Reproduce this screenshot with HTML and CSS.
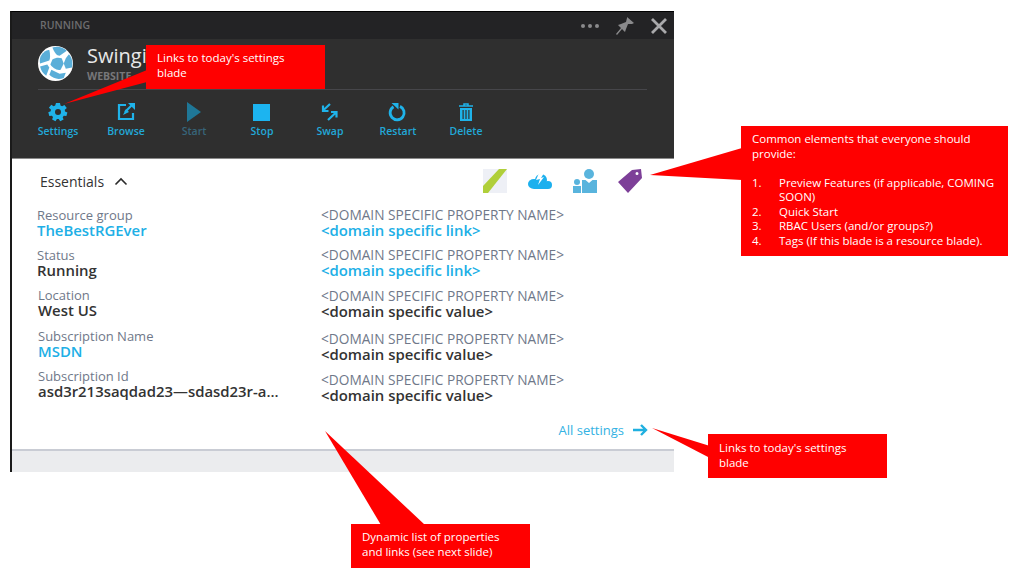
FILE: index.html
```html
<!DOCTYPE html>
<html lang="en">
<head>
<meta charset="utf-8">
<title>Blade annotations</title>
<link rel="stylesheet" href="styles.css">
</head>
<body>
<div class="blade">
  <div class="statusbar">
    <span class="status-text">RUNNING</span>
    <div class="window-actions">
      <svg class="dots" width="20" height="6" viewBox="0 0 20 6"><circle cx="3" cy="3" r="2"/><circle cx="10" cy="3" r="2"/><circle cx="17" cy="3" r="2"/></svg>
      <svg class="pin" width="20" height="20" viewBox="0 0 20 20"><path d="M12 1l7 6-2 1-4 0-2 5-1 3-3-3-5 6-1-1 5-6-3-3 3-1 5-2 1-4z"/></svg>
      <svg class="close" width="18" height="18" viewBox="0 0 18 18"><path d="M2 2l14 14M16 2L2 16"/></svg>
    </div>
  </div>
  <div class="hero">
    <div class="title-row">
      <svg class="logo" width="35" height="35" viewBox="0 0 34 34">
        <circle cx="17" cy="17" r="17" fill="#fff"/>
        <g fill="#5aaed8">
          <path d="M14 1.500c5-1.500 10-.5 14 3l-7 5c-3 0-5-3-7-8z"/>
          <path d="M7 5c2-1 3-1 4-1 1 4 1 8 0 10l-9 3c-1-6 1-9 5-12z"/>
          <path d="M14 13c3-2 7-2 9-1l2 5-3 6c-4 1-8-2-10-5z"/>
          <path d="M27 12l3-4c3 3 4 8 3 13l-6 1-2-5z"/>
          <path d="M11 28l2-5 8 4 6-1-2 5c-5 2-10 1-14-3z"/>
          <path d="M2 20l7-2 2 3-3 8c-3-2-5-5-6-9z"/>
        </g>
      </svg>
      <div class="title-text">
        <div class="title">Swinging</div>
        <div class="subtitle">WEBSITE</div>
      </div>
    </div>
    <div class="divider"></div>
    <div class="commands">
      <div class="cmd">
        <svg width="20" height="20" viewBox="0 0 20 20"><path fill-rule="evenodd" fill="#1fb3ea" d="M8 1h4l.5 2.600 1.600.7 2.300-1.400 2.400 3-2 1.800.2 1.700 2.400 1-1 3.700-2.600-.3-1.100 1.400.9 2.400-3.400 1.700-1.500-2.200h-1.800L7.500 19.200 4.100 17.500l.9-2.400-1.100-1.400-2.600.3-1-3.700 2.400-1 .2-1.700-2-1.800 2.400-3 2.300 1.400 1.600-.7zM10 7a3 3 0 1 0 0 6 3 3 0 0 0 0-6z"/></svg>
        <span>Settings</span>
      </div>
      <div class="cmd">
        <svg width="20" height="20" viewBox="0 0 20 20"><path d="M10 3H3v14h14v-6" fill="none" stroke="#1fb3ea" stroke-width="2.200"/><path d="M7 13l3-6 3 3z" fill="#1fb3ea"/><path d="M9 10l8-8" stroke="#1fb3ea" stroke-width="2.200"/><path d="M12 1h7v7z" fill="#1fb3ea"/></svg>
        <span>Browse</span>
      </div>
      <div class="cmd cmd-disabled">
        <svg width="20" height="20" viewBox="0 0 20 20"><path d="M3 0l14 10L3 20z" fill="#1f7797"/></svg>
        <span>Start</span>
      </div>
      <div class="cmd">
        <svg width="20" height="20" viewBox="0 0 20 20"><rect x="1" y="2" width="17" height="17" fill="#1cb4f0"/></svg>
        <span>Stop</span>
      </div>
      <div class="cmd">
        <svg width="20" height="20" viewBox="0 0 20 20"><g fill="none" stroke="#1fb3ea" stroke-width="2.200"><path d="M10 2L3 8.500M3 3.500V9h5.500"/><path d="M8 18l8-7.500M11 10h5.500v5.500"/></g></svg>
        <span>Swap</span>
      </div>
      <div class="cmd">
        <svg width="20" height="20" viewBox="0 0 20 20"><path d="M12 4.400A7 7 0 1 1 5.500 4.800" fill="none" stroke="#1fb3ea" stroke-width="2.800"/><path d="M3.500 1h7v6.500z" fill="#1fb3ea"/></svg>
        <span>Restart</span>
      </div>
      <div class="cmd">
        <svg width="20" height="20" viewBox="0 0 20 20"><path d="M3 4h14M8 4V2h4v2" fill="none" stroke="#1fb3ea" stroke-width="1.500"/><path fill-rule="evenodd" fill="#1fb3ea" d="M4 6h12v13H4zM6.500 8v9h1.200V8zM9.400 8v9h1.200V8zM12.300 8v9h1.200V8z"/></svg>
        <span>Delete</span>
      </div>
    </div>
  </div>
  <div class="content">
    <div class="essentials-head">
      <div class="essentials-title">Essentials
        <svg width="14" height="9" viewBox="0 0 14 9"><path d="M1.500 7.500L7 2l5.500 5.500" fill="none" stroke="#2b2b2b" stroke-width="1.600"/></svg>
      </div>
      <div class="feature-icons">
        <svg width="24" height="24" viewBox="0 0 24 24"><rect width="24" height="24" fill="#eef0f6"/><path d="M0 24V17L16 0h8L5 24z" fill="#b0cf3a"/></svg>
        <svg width="24" height="16" viewBox="0 0 24 16"><g fill="#1cb0ee"><ellipse cx="6" cy="11" rx="6" ry="5"/><circle cx="13" cy="7" r="6"/><circle cx="20" cy="12" r="4"/><rect x="6" y="10" width="14" height="6"/></g><path d="M11 0L8 7l4-1-2 6 6-8-3 1 3-5z" fill="#fff"/></svg>
        <svg width="24" height="24" viewBox="0 0 24 24"><g fill="#59b4dd"><circle cx="16" cy="5" r="5"/><path d="M9 11h3.500l3.500 3 3.500-3H24v13H9z"/><circle cx="4" cy="13" r="3"/><path d="M0 17h8v7H0z"/></g></svg>
        <svg width="24" height="24" viewBox="0 0 24 24"><path fill-rule="evenodd" d="M14 1l9-1 1 9L10 24 0 13zM19 3a1.500 1.500 0 1 0 0 3 1.500 1.500 0 0 0 0-3z" fill="#7d3f98"/></svg>
      </div>
    </div>
    <div class="props">
      <div class="prop-col prop-col-left">
        <div class="prop"><div class="prop-label">Resource group</div><div class="prop-value prop-link">TheBestRGEver</div></div>
        <div class="prop"><div class="prop-label">Status</div><div class="prop-value">Running</div></div>
        <div class="prop prop-in"><div class="prop-label">Location</div><div class="prop-value">West US</div></div>
        <div class="prop prop-in prop-down"><div class="prop-label">Subscription Name</div><div class="prop-value prop-link">MSDN</div></div>
        <div class="prop prop-in"><div class="prop-label">Subscription Id</div><div class="prop-value">asd3r213saqdad23—sdasd23r-a...</div></div>
      </div>
      <div class="prop-col prop-col-right">
        <div class="prop"><div class="prop-label prop-label-wide">&lt;DOMAIN SPECIFIC PROPERTY NAME&gt;</div><div class="prop-value prop-link">&lt;domain specific link&gt;</div></div>
        <div class="prop"><div class="prop-label prop-label-wide">&lt;DOMAIN SPECIFIC PROPERTY NAME&gt;</div><div class="prop-value prop-link">&lt;domain specific link&gt;</div></div>
        <div class="prop prop-down"><div class="prop-label prop-label-wide">&lt;DOMAIN SPECIFIC PROPERTY NAME&gt;</div><div class="prop-value">&lt;domain specific value&gt;</div></div>
        <div class="prop prop-down-lg"><div class="prop-label prop-label-wide">&lt;DOMAIN SPECIFIC PROPERTY NAME&gt;</div><div class="prop-value">&lt;domain specific value&gt;</div></div>
        <div class="prop prop-down"><div class="prop-label prop-label-wide">&lt;DOMAIN SPECIFIC PROPERTY NAME&gt;</div><div class="prop-value">&lt;domain specific value&gt;</div></div>
      </div>
    </div>
    <div class="all-settings">All settings
      <svg width="15" height="12" viewBox="0 0 15 12"><path d="M0 6h12.500M8 1l5 5-5 5" fill="none" stroke="#20b0e0" stroke-width="2.400"/></svg>
    </div>
  </div>
  <div class="blade-foot"></div>
</div>

<svg class="tails" width="1016" height="575" viewBox="0 0 1016 575">
  <polygon points="64,104 147,70 147,82"/>
  <polygon points="650,175 742,148 742,180"/>
  <polygon points="652,428 710,446 710,458"/>
  <polygon points="325,431 381,525 425,525"/>
</svg>
<div class="callout callout-settings">Links to today's settings blade</div>
<div class="callout callout-common">
  <p class="callout-intro">Common elements that everyone should provide:</p>
  <ol class="callout-list">
    <li>Preview Features (if applicable, COMING SOON)</li>
    <li>Quick Start</li>
    <li>RBAC Users (and/or groups?)</li>
    <li>Tags (If this blade is a resource blade).</li>
  </ol>
</div>
<div class="callout callout-all">Links to today's settings blade</div>
<div class="callout callout-dynamic">Dynamic list of properties and links (see next slide)</div>
</body>
</html>
```
FILE: styles.css
```css
* { box-sizing: border-box; }
html, body { margin: 0; padding: 0; }
body {
  width: 1016px;
  height: 575px;
  position: relative;
  overflow: hidden;
  background: #fff;
  font-family: "Open Sans", "Noto Sans", sans-serif;
}
.blade {
  margin: 11px 0 0 10px;
  width: 664px;
  height: 461px;
  display: flex;
  flex-direction: column;
  border-top: 1px solid #000;
  border-left: 2px solid #1a1a1a;
}
.statusbar {
  height: 27px;
  flex: none;
  background: #232325;
  display: flex;
  align-items: center;
  justify-content: space-between;
  padding: 0 6px 2px 28px;
}
.status-text { font-size: 10.500px; font-weight: 600; color: #6d6d6f; }
.window-actions { display: flex; align-items: center; gap: 13px; margin-top: 2px; }
.dots { fill: #8a8a8c; margin-right: 1px; }
.pin { fill: #8a8a8c; margin-right: 2px; margin-left: 1px; }
.close { fill: none; stroke: #a9a9ab; stroke-width: 2.800; }
.hero {
  height: 120px;
  flex: none;
  background: #2f2f2f;
  border-bottom: 1px solid #8a8a8a;
  padding: 6px 27px 0 26px;
}
.title-row { display: flex; gap: 14px; height: 44px; }
.logo { flex: none; margin-top: 1px; }
.title { font-size: 20px; font-weight: 400; color: #e8e8e8; line-height: 26px; margin-top: -2px; }
.subtitle { font-size: 10.500px; font-weight: 700; color: #77777a; line-height: 14px; }
.divider { height: 1px; background: #46464a; }
.commands { display: flex; padding-top: 12px; margin-left: -14px; }
.cmd {
  width: 68px;
  display: flex;
  flex-direction: column;
  align-items: center;
  gap: 2px;
  font-size: 10.500px;
  font-weight: 600;
  color: #22a8d8;
  line-height: 14px;
}
.cmd-disabled { color: #37657a; }
.content {
  flex: 1;
  min-height: 0;
  background: #fff;
  padding: 0 26px;
}
.essentials-head {
  display: flex;
  justify-content: space-between;
  align-items: center;
  height: 44px;
  padding: 0 6px 0 2px;
}
.essentials-title {
  font-size: 14px;
  color: #333;
  display: flex;
  align-items: center;
  gap: 10px;
}
.feature-icons { display: flex; align-items: center; gap: 21px; margin-top: -1px; }
.props { display: flex; padding-top: 5px; }
.prop-col { display: flex; flex-direction: column; gap: 11px; }
.prop-col-left { width: 284px; margin-left: -1px; }
.prop-in { margin-left: 1px; }
.prop-down { margin-top: 1px; }
.prop-down-lg { margin-top: 3px; }
.prop-label { font-size: 13px; color: #6f7889; line-height: 15px; white-space: nowrap; }
.prop-label-wide { font-size: 13.700px; margin-top: -1px; margin-bottom: 1px; }
.prop-value { font-size: 14.900px; color: #333; font-weight: 600; line-height: 14px; white-space: nowrap; }
.prop-link { color: #20afe6; }
.all-settings {
  display: flex;
  justify-content: flex-end;
  align-items: center;
  gap: 9px;
  margin-top: 19px;
  font-size: 13px;
  color: #33b2e3;
}
.blade-foot {
  height: 23px;
  flex: none;
  background: #ebecee;
  border-top: 2px solid #c9ccd4;
}
.tails { position: absolute; left: 0; top: 0; fill: #f00; pointer-events: none; }
.callout {
  position: absolute;
  background: #f00;
  color: #fff;
  font-size: 11.500px;
  line-height: 14.500px;
}
.callout-settings { left: 146px; top: 45px; width: 179px; height: 44px; padding: 6px 30px 0 11px; }
.callout-common { left: 741px; top: 126px; width: 267px; height: 130px; padding: 6px 5px 0 11px; }
.callout-all { left: 708px; top: 434px; width: 179px; height: 44px; padding: 7px 30px 0 11px; }
.callout-dynamic { left: 351px; top: 524px; width: 179px; height: 44px; padding: 6px 20px 0 11px; }
.callout-intro { margin: 0 0 14.500px; }
.callout-list { margin: 0; padding: 0; list-style: none; counter-reset: item; }
.callout-list li { counter-increment: item; position: relative; padding-left: 27px; }
.callout-list li::before { content: counter(item) "."; position: absolute; left: 0; top: 0; }
```
